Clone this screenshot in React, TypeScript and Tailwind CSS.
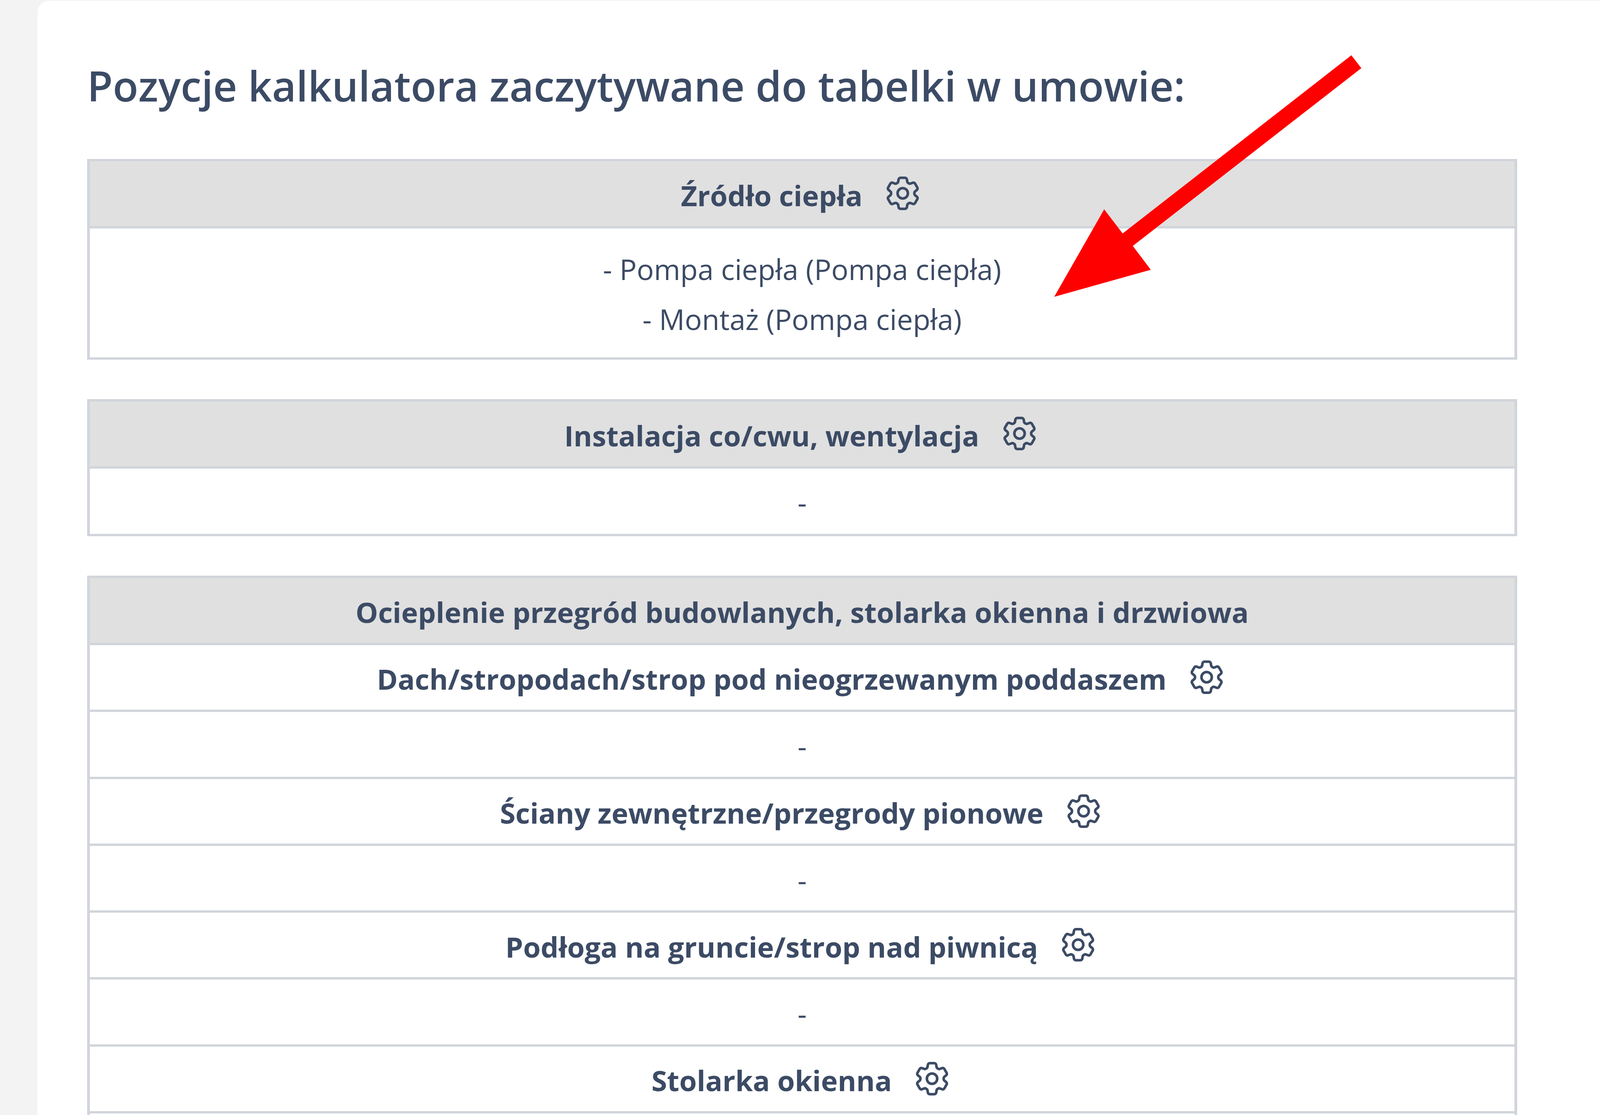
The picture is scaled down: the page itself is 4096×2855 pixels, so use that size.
import { ReactNode } from 'react';
import { HiOutlineCog6Tooth } from 'react-icons/hi2';

function Gear() {
  return <HiOutlineCog6Tooth className="ml-[50px] -mt-[9px] h-[106px] w-[106px] shrink-0" />;
}

function Row({ children }: { children: ReactNode }) {
  return (
    <div className="flex h-[171.3px] items-center justify-center border-b-[6px] border-[#d1d5db]">
      {children}
    </div>
  );
}

function Title({ text, gear = true }: { text: string; gear?: boolean }) {
  return (
    <div className="flex items-center justify-center pt-[8px] text-[72.4px] font-bold">
      <span>{text}</span>
      {gear && <Gear />}
    </div>
  );
}

function Dash() {
  return (
    <Row>
      <span className="pt-[8px]">-</span>
    </Row>
  );
}

export default function App() {
  return (
    <div className="relative flex h-[2855px] w-[4096px] overflow-hidden bg-[#f3f3f3] pt-[2px] font-['Open_Sans',sans-serif] text-[73px] text-[#3c4b65]">
      <div className="ml-[96px] flex-1 rounded-tl-[30px] bg-white pl-[127px] pr-[212px] pt-[134px]">
        <h1 className="mb-[106px] h-[165px] text-[107px] leading-[165px] font-semibold">
          Pozycje kalkulatora zaczytywane do tabelki w umowie:
        </h1>

        {/* Źródło ciepła */}
        <section className="mb-[101px] border-x-[7px] border-y-[6px] border-[#d1d5db]">
          <div className="flex h-[172px] items-center justify-center border-b-[6px] border-[#d1d5db] bg-[#e0e0e0]">
            <Title text="Źródło ciepła" />
          </div>
          <div className="flex h-[330px] flex-col items-center justify-center pt-[6px] leading-[128px]">
            <p>- Pompa ciepła (Pompa ciepła)</p>
            <p>- Montaż (Pompa ciepła)</p>
          </div>
        </section>

        {/* Instalacja */}
        <section className="mb-[101px] border-x-[7px] border-t-[6px] border-[#d1d5db]">
          <div className="flex h-[172px] items-center justify-center border-b-[6px] border-[#d1d5db] bg-[#e0e0e0]">
            <Title text="Instalacja co/cwu, wentylacja" />
          </div>
          <div className="flex h-[173px] items-center justify-center border-b-[6px] border-[#d1d5db]">
            <span className="pt-[4px]">-</span>
          </div>
        </section>

        {/* Ocieplenie */}
        <section className="border-x-[7px] border-t-[6px] border-[#d1d5db]">
          <div className="flex h-[172px] items-center justify-center border-b-[6px] border-[#d1d5db] bg-[#e0e0e0]">
            <Title text="Ocieplenie przegród budowlanych, stolarka okienna i drzwiowa" gear={false} />
          </div>
          <Row>
            <Title text="Dach/stropodach/strop pod nieogrzewanym poddaszem" />
          </Row>
          <Dash />
          <Row>
            <Title text="Ściany zewnętrzne/przegrody pionowe" />
          </Row>
          <Dash />
          <Row>
            <Title text="Podłoga na gruncie/strop nad piwnicą" />
          </Row>
          <Dash />
          <Row>
            <Title text="Stolarka okienna" />
          </Row>
          <div className="h-[60px]" />
        </section>
      </div>

      {/* Red annotation arrow */}
      <svg className="absolute left-0 top-0" width="4096" height="2855" viewBox="0 0 4096 2855">
        <polygon
          fill="#ff0000"
          points="3459.5,141.6 3485,174.4 2900,629.8 2946,690.7 2698.8,760 2826.7,536 2874,597.8"
        />
      </svg>
    </div>
  );
}
